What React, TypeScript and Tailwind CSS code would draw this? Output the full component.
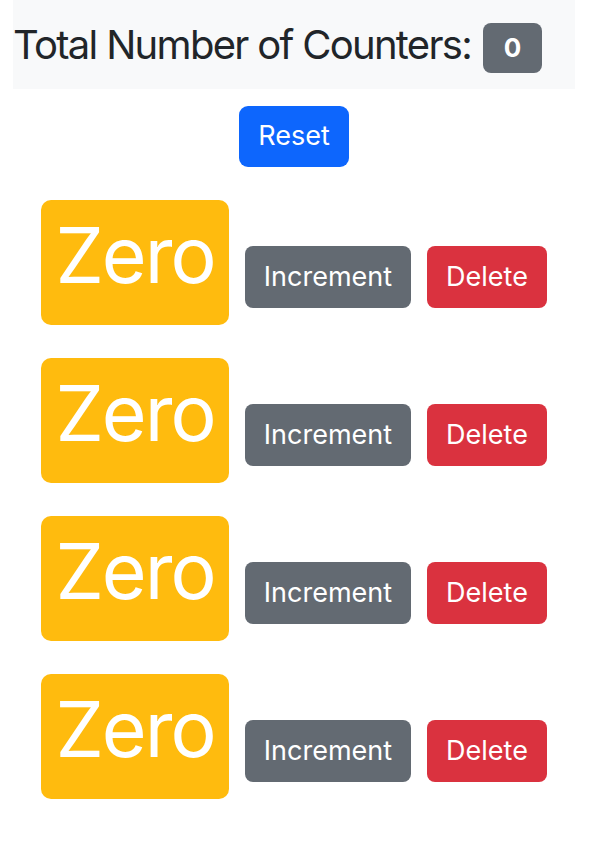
import React from "react";

function Row() {
  return (
    <div className="flex items-start gap-[16px] pl-[28px]">
      <span className="flex h-[125px] w-[188px] items-center justify-center rounded-[10px] bg-[#ffbb0e] pb-[14px] text-[77px] leading-none tracking-[-2px] text-white">
        Zero
      </span>
      <button className="mt-[46px] h-[62px] w-[166px] rounded-[8px] bg-[#636a72] text-[27px] text-white">
        Increment
      </button>
      <button className="mt-[46px] h-[62px] w-[120px] rounded-[8px] bg-[#da323f] text-[27px] text-white">
        Delete
      </button>
    </div>
  );
}

export default function App() {
  return (
    <div className="min-h-[848px] bg-white font-['Inter',sans-serif] text-[#212529]">
      <div className="ml-[13px] w-[562px]">
        <div className="flex h-[89px] items-center whitespace-nowrap bg-[#f8f9fa] text-[40px] leading-none">
          <span className="tracking-[-1.7px]">Total Number of Counters:</span>
          <span className="ml-[12px] mt-[7px] flex h-[50px] w-[59px] items-center justify-center rounded-[8px] bg-[#636a72] text-[26px] font-bold text-white">
            0
          </span>
        </div>
        <div className="mt-[17px] flex justify-center">
          <button className="h-[61px] w-[110px] rounded-[9px] bg-[#0d66fd] text-[27px] text-white">
            Reset
          </button>
        </div>
        <div className="mt-[33px] flex flex-col gap-[33px]">
          <Row />
          <Row />
          <Row />
          <Row />
        </div>
      </div>
    </div>
  );
}
